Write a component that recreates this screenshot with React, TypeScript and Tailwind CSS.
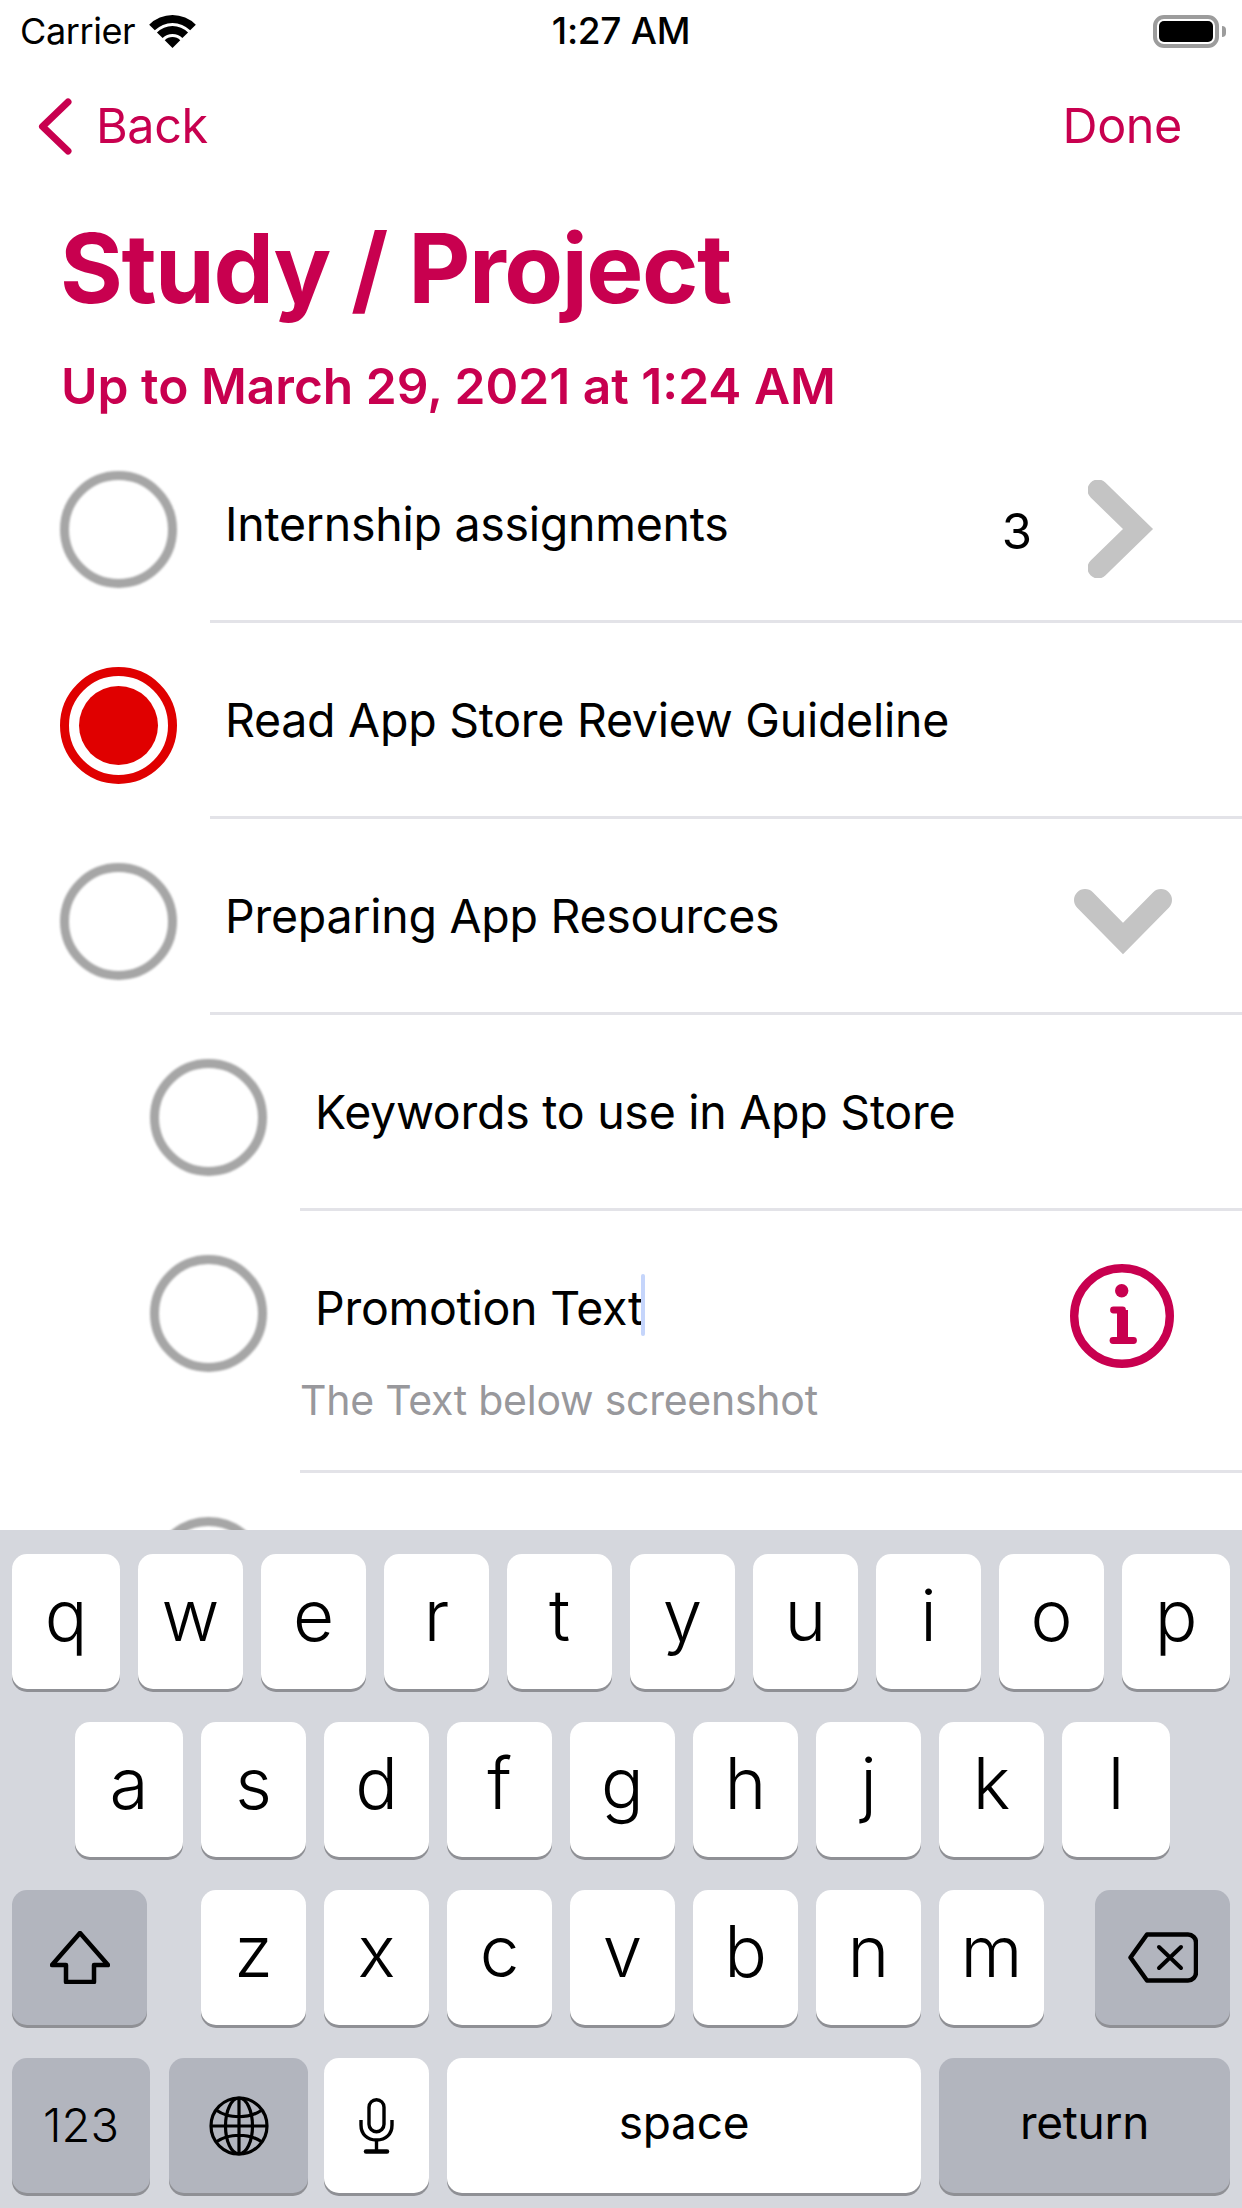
import type { ReactNode } from 'react'

const font = "font-['Inter','Liberation_Sans',sans-serif]"

function Circle({ on }: { on?: boolean }) {
  if (on) {
    return (
      <div className="mt-[44px] h-[117px] w-[117px] shrink-0 rounded-full border-[9px] border-[#e00000] p-[10px] blur-[0.4px]">
        <div className="h-full w-full rounded-full bg-[#e00000]" />
      </div>
    )
  }
  return <div className="mt-[44px] h-[117px] w-[117px] shrink-0 rounded-full border-[9px] border-[#a6a6a6] blur-[0.8px]" />
}

function Row({
  text,
  level = 0,
  on,
  tall,
  sub,
  caret,
  children,
}: {
  text?: string
  level?: number
  on?: boolean
  tall?: boolean
  sub?: string
  caret?: boolean
  children?: ReactNode
}) {
  return (
    <div className={`flex shrink-0 ${level ? 'pl-[150px]' : 'pl-[60px]'} ${tall ? 'h-[262px]' : 'h-[196px]'}`}>
      <Circle on={on} />
      <div className="ml-[33px] flex min-w-0 flex-1 border-b-[3px] border-[#e3e3e8]">
        <div className="flex-1">
          <div className="relative mt-[69px] w-fit pl-[15px] text-[46.5px] leading-[56px] tracking-[-0.27px] text-black">
            {text}
            {caret && <span className="absolute top-[-6px] right-[-2px] h-[62px] w-[4px] rounded-full bg-[#c5d5fb]" />}
          </div>
          {sub && <div className="mt-[40px] text-[41px] leading-[48px] tracking-[-0.25px] text-[#98989c]">{sub}</div>}
        </div>
        {children}
      </div>
    </div>
  )
}

function Key({ children, dark, className = 'w-[105px]' }: { children?: ReactNode; dark?: boolean; className?: string }) {
  return (
    <div
      className={`flex h-[135px] shrink-0 items-center justify-center rounded-[15px] text-black shadow-[0_3px_0_#8f9095] ${
        dark ? 'bg-[#b2b5be]' : 'bg-white'
      } ${className}`}
    >
      {children}
    </div>
  )
}

function Letter({ ch, wide }: { ch: string; wide?: boolean }) {
  return (
    <Key className={wide ? 'w-[108px]' : 'w-[105px]'}>
      <span className="pb-[12px] text-[71px] leading-none font-light">{ch}</span>
    </Key>
  )
}

function WifiIcon() {
  return (
    <svg width="47" height="33" viewBox="-0.5 0 47 33" className="ml-[14px]" fill="#000">
      <path d="M-0.33 9.67A33 33 0 0 1 46.33 9.67L40.68 15.32A25 25 0 0 0 5.32 15.32Z" />
      <path d="M7.44 17.44A22 22 0 0 1 38.56 17.44L32.9 23.1A14 14 0 0 0 13.1 23.1Z" />
      <path d="M15.22 25.22A11 11 0 0 1 30.78 25.22L23 33Z" />
    </svg>
  )
}

function Battery() {
  return (
    <div className="flex items-center">
      <div className="h-[33px] w-[66px] rounded-[11px] border-[4px] border-[#9c9c9c] p-[2px]">
        <div className="h-full w-full rounded-[5px] bg-black" />
      </div>
      <div className="ml-[3px] h-[11px] w-[4px] rounded-r-full bg-[#9c9c9c]" />
    </div>
  )
}

function InfoIcon() {
  return (
    <svg width="104" height="104" viewBox="0 0 104 104" className="mt-[53px] mr-[68px]" fill="none" stroke="#c8004f" strokeLinecap="round">
      <circle cx="52" cy="52" r="47.8" strokeWidth="8.4" />
      <circle cx="51.7" cy="26.7" r="6.7" fill="#c8004f" stroke="none" />
      <path d="M43.5 46H52.5" strokeWidth="6.8" />
      <path d="M52.5 46V76" strokeWidth="11" strokeLinecap="butt" />
      <path d="M43 76.5H63.5" strokeWidth="6.8" />
    </svg>
  )
}

function ShiftIcon() {
  return (
    <svg width="60" height="53" viewBox="0 0 60 53">
      <path d="M30 2L58 34H44V51H16V34H2Z" fill="none" stroke="#000" strokeWidth="4.5" strokeLinejoin="round" />
    </svg>
  )
}

function DeleteIcon() {
  return (
    <svg width="70" height="51" viewBox="0 0 70 51">
      <path d="M19 2.5H60a8 8 0 0 1 8 8v30a8 8 0 0 1-8 8H19L2.5 25.5Z" fill="none" stroke="#000" strokeWidth="4.5" strokeLinejoin="round" />
      <path d="M31 15L53 36M53 15L31 36" fill="none" stroke="#000" strokeWidth="4" strokeLinecap="round" />
    </svg>
  )
}

function GlobeIcon() {
  return (
    <svg width="60" height="60" viewBox="0 0 60 60" fill="none" stroke="#000" strokeWidth="3.2">
      <circle cx="30" cy="30" r="28" />
      <ellipse cx="30" cy="30" rx="13.5" ry="28" />
      <path d="M30 2V58M2 30H58M7 14C20 23 40 23 53 14M7 46C20 37 40 37 53 46" />
    </svg>
  )
}

function MicIcon() {
  return (
    <svg width="35" height="56" viewBox="0 0 35 56" fill="none" stroke="#000" strokeWidth="3.4">
      <rect x="10" y="1.7" width="15" height="32" rx="7.5" />
      <path d="M2 22V27C2 36 8 42 17.5 42C27 42 33 36 33 27V22" />
      <path d="M17.5 42V52" />
      <path d="M7 53.5H28" strokeWidth="4.5" strokeLinecap="round" />
    </svg>
  )
}

export default function App() {
  return (
    <div className={`flex h-[2208px] w-[1242px] flex-col overflow-hidden bg-white ${font}`}>
      {/* status bar */}
      <div className="relative flex h-[62px] shrink-0 items-center justify-between pr-[16px] pl-[20px] text-[36px] text-black">
        <div className="flex items-center tracking-[-0.4px]">
          Carrier
          <WifiIcon />
        </div>
        <div className="absolute left-0 w-full text-center text-[37px] font-medium tracking-[-0.3px]">1:27 AM</div>
        <Battery />
      </div>

      {/* nav */}
      <div className="flex h-[127px] shrink-0 items-center justify-between pt-[2px] pr-[60px] pl-[38px] text-[48.5px] tracking-[-0.4px] text-[#c8004f]">
        <div className="flex items-center">
          <svg width="34" height="57" viewBox="0 0 34 57" fill="none" stroke="#c8004f" strokeWidth="7" strokeLinecap="round" strokeLinejoin="round">
            <path d="M30 4L4.5 28.5L30 53" />
          </svg>
          <span className="ml-[24px]">Back</span>
        </div>
        <span>Done</span>
      </div>

      <div className="flex h-[157px] shrink-0 items-center pl-[60px] text-[96px] leading-none font-bold tracking-[-1.45px] text-[#c8004f]">Study / Project</div>
      <div className="flex h-[81px] shrink-0 items-center pl-[61px] text-[49.7px] leading-none font-semibold tracking-[0px] text-[#c8004f]">Up to March 29, 2021 at 1:24 AM</div>

      {/* list */}
      <div className="flex min-h-0 flex-1 flex-col overflow-hidden">
        <Row text="Internship assignments">
          <span className="mt-[77px] mr-[56px] text-[49px] leading-[56px] text-black">3</span>
          <svg width="67" height="98" viewBox="0 0 67 98" className="mt-[53px] mr-[87px]">
            <path d="M10 10L50 49L10 88" fill="none" stroke="#c4c4c4" strokeWidth="21" strokeLinecap="round" strokeLinejoin="miter" />
          </svg>
        </Row>
        <Row text="Read App Store Review Guideline" on />
        <Row text="Preparing App Resources">
          <svg width="98" height="66" viewBox="0 0 98 66" className="mt-[70px] mr-[70px]">
            <path d="M11 11L49 49.5L87 11" fill="none" stroke="#c4c4c4" strokeWidth="22" strokeLinecap="round" strokeLinejoin="miter" />
          </svg>
        </Row>
        <Row text="Keywords to use in App Store" level={1} />
        <Row text="Promotion Text" level={1} tall sub="The Text below screenshot" caret>
          <InfoIcon />
        </Row>
        <Row level={1} />
      </div>

      {/* keyboard */}
      <div className="flex h-[678px] shrink-0 flex-col gap-[33px] bg-[#d5d7dd] pt-[24px]">
        <div className="flex gap-[18px] pl-[12px]">
          {'qwertyuiop'.split('').map((ch, i) => (
            <Letter key={ch} ch={ch} wide={i === 0 || i === 9} />
          ))}
        </div>
        <div className="flex gap-[18px] pl-[75px]">
          {'asdfghjkl'.split('').map((ch, i) => (
            <Letter key={ch} ch={ch} wide={i === 0 || i === 8} />
          ))}
        </div>
        <div className="flex gap-[18px] pl-[12px]">
          <Key dark className="mr-[36px] w-[135px]">
            <ShiftIcon />
          </Key>
          {'zxcvbnm'.split('').map((ch) => (
            <Letter key={ch} ch={ch} />
          ))}
          <Key dark className="ml-[33px] w-[135px]">
            <DeleteIcon />
          </Key>
        </div>
        <div className="flex pl-[12px]">
          <Key dark className="w-[138px]">
            <span className="text-[47px] font-light">123</span>
          </Key>
          <Key dark className="ml-[19px] w-[139px]">
            <GlobeIcon />
          </Key>
          <Key className="ml-[16px] w-[105px]">
            <MicIcon />
          </Key>
          <Key className="ml-[18px] w-[474px]">
            <span className="pb-[6px] text-[46px] font-normal tracking-[-0.3px]">space</span>
          </Key>
          <Key dark className="ml-[18px] w-[291px]">
            <span className="pb-[6px] text-[46px] font-normal tracking-[-0.3px]">return</span>
          </Key>
        </div>
      </div>
    </div>
  )
}
